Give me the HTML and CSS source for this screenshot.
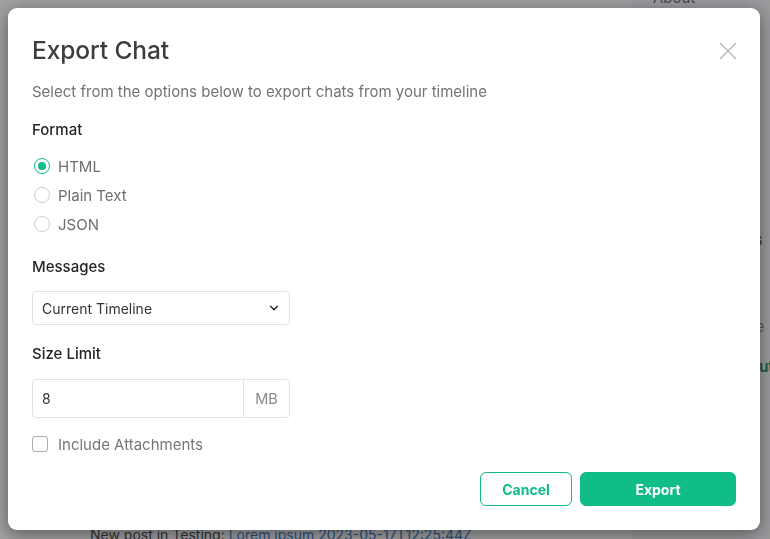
FILE: index.html
```html
<!DOCTYPE html>
<html>
<head>
<meta charset="utf-8">
<link rel="stylesheet" href="styles.css">
</head>
<body>
<div class="page">
  <main class="main">
    <div class="feed-item"><span class="feed-text">New post in Testing: </span><span class="feed-link">Lorem ipsum 2023-05-17T12:25:44Z</span></div>
  </main>
  <aside class="sidebar">
    <div class="side-link about">About</div>
    <div class="side-link s1">Settings</div>
    <div class="side-link s2">Theme</div>
    <div class="side-link s3 green">Logout</div>
  </aside>
</div>
<div class="overlay"></div>
<div class="modal">
  <div class="modal-head">
    <h1 class="title">Export Chat</h1>
    <button class="close" aria-label="Close">
      <svg width="18" height="18" viewBox="0 0 18 18"><path d="M1.5 1.5 L16.5 16.5 M16.5 1.5 L1.5 16.5" stroke="#bdbdbd" stroke-width="1.6" fill="none" stroke-linecap="round"/></svg>
    </button>
  </div>
  <p class="subtitle">Select from the options below to export chats from your timeline</p>

  <div class="label first">Format</div>
  <div class="radios">
    <label class="radio-row"><span class="radio checked"></span><span class="opt">HTML</span></label>
    <label class="radio-row"><span class="radio"></span><span class="opt">Plain Text</span></label>
    <label class="radio-row"><span class="radio"></span><span class="opt">JSON</span></label>
  </div>

  <div class="label messages">Messages</div>
  <div class="select">
    <span>Current Timeline</span>
    <svg width="10" height="6" viewBox="0 0 10 6"><path d="M1.5 1.2 L5 4.6 L8.5 1.2" stroke="#333" stroke-width="1.5" fill="none" stroke-linecap="round" stroke-linejoin="round"/></svg>
  </div>

  <div class="label size">Size Limit</div>
  <div class="input-group">
    <span class="input-val">8</span>
    <span class="addon">MB</span>
  </div>

  <label class="check-row"><span class="checkbox"></span><span class="opt light">Include Attachments</span></label>

  <div class="actions">
    <button class="btn cancel">Cancel</button>
    <button class="btn export">Export</button>
  </div>
</div>
</body>
</html>
```
FILE: styles.css
```css
* { box-sizing: border-box; }
html, body {
  margin: 0;
  padding: 0;
  width: 770px;
  height: 539px;
  overflow: hidden;
  font-family: Inter, "Noto Sans", sans-serif;
}
.page {
  display: flex;
  width: 770px;
  height: 539px;
  background: #ffffff;
}
.main {
  flex: 1;
  display: flex;
  flex-direction: column;
  justify-content: flex-end;
  padding: 0 0 0 90px;
}
.feed-item {
  font-size: 14px;
  line-height: 20px;
  margin-bottom: -6px;
  white-space: nowrap;
}
.feed-text { color: #444; }
.feed-link { color: #3a78c2; }
.sidebar {
  width: 138px;
  background: #f4f5f7;
  display: flex;
  flex-direction: column;
  padding-left: 21px;
  font-size: 15px;
  color: #555;
}
.side-link { line-height: 20px; white-space: nowrap; }
.about { margin-top: -12px; color: #666; }
.s1 { margin-top: 222px; text-indent: 52px; color: #444; }
.s2 { margin-top: 67px; text-indent: 62px; color: #888; }
.s3 { margin-top: 20px; text-indent: 70px; font-weight: 600; }
.green { color: #0a8a5c; }
.overlay {
  position: fixed;
  inset: 0;
  background: rgba(30, 32, 36, 0.42);
}
.modal {
  position: fixed;
  left: 8px;
  top: 8px;
  width: 752px;
  height: 522px;
  background: #fff;
  border-radius: 9px;
  box-shadow: 0 4px 18px rgba(0, 0, 0, 0.45);
  padding: 26px 24px 24px 24px;
  display: flex;
  flex-direction: column;
  align-items: flex-start;
}
.modal-head {
  width: 100%;
  display: flex;
  justify-content: space-between;
  align-items: center;
}
.title {
  margin: 0;
  font-size: 24.5px;
  line-height: 32px;
  font-weight: 500;
  color: #3d3d3d;
  letter-spacing: -0.1px;
}
.close {
  border: 0;
  background: none;
  padding: 0;
  margin-right: -1px;
  margin-top: 2px;
  width: 18px;
  height: 18px;
  display: flex;
}
.subtitle {
  margin: 16px 0 0 0;
  font-size: 15px;
  line-height: 20px;
  color: #737373;
}
.label {
  font-size: 15px;
  line-height: 20px;
  font-weight: 500;
  color: #262626;
}
.label.first { margin-top: 18px; }
.label.messages { margin-top: 23px; }
.label.size { margin-top: 19px; }
.radios {
  margin-top: 16px;
  display: flex;
  flex-direction: column;
  gap: 9px;
}
.radio-row, .check-row {
  display: flex;
  align-items: center;
  height: 20px;
}
.radio {
  width: 16px;
  height: 16px;
  border-radius: 50%;
  border: 1px solid #c9ccd1;
  margin-left: 2px;
  margin-right: 8px;
  position: relative;
}
.radio.checked { border: 1.5px solid #10bc87; }
.radio.checked::after {
  content: "";
  position: absolute;
  left: 2.5px;
  top: 2.5px;
  width: 8px;
  height: 8px;
  border-radius: 50%;
  background: #10bc87;
}
.opt {
  font-size: 15px;
  color: #6e6e6e;
}
.opt.light { color: #777; }
.select {
  margin-top: 14px;
  width: 258px;
  height: 34px;
  border: 1px solid #e1e3e6;
  border-radius: 4px;
  display: flex;
  align-items: center;
  justify-content: space-between;
  padding: 0 10px 0 9px;
  font-size: 14px;
  color: #333;
}
.input-group {
  margin-top: 15px;
  width: 258px;
  height: 39px;
  border: 1px solid #e1e3e6;
  border-radius: 4px;
  display: flex;
  align-items: center;
  font-size: 14px;
}
.input-val {
  flex: 1;
  padding-left: 9px;
  color: #333;
}
.addon {
  width: 46px;
  height: 100%;
  border-left: 1px solid #e1e3e6;
  display: flex;
  align-items: center;
  justify-content: center;
  color: #888;
  font-size: 14.5px;
}
.check-row { margin-top: 16px; }
.checkbox {
  width: 16px;
  height: 16px;
  border: 1px solid #a9adb5;
  border-radius: 3px;
  margin-right: 10px;
}
.actions {
  margin-top: auto;
  align-self: flex-end;
  display: flex;
  gap: 8px;
  margin-bottom: 0;
}
.btn {
  height: 34px;
  border-radius: 6px;
  font-family: Inter, "Noto Sans", sans-serif;
  font-size: 14px;
  font-weight: 700;
  cursor: pointer;
}
.cancel {
  width: 92px;
  background: #fff;
  border: 1px solid #10bc87;
  color: #10bc87;
}
.export {
  width: 156px;
  background: #10bc87;
  border: 1px solid #10bc87;
  color: #fff;
}
```
